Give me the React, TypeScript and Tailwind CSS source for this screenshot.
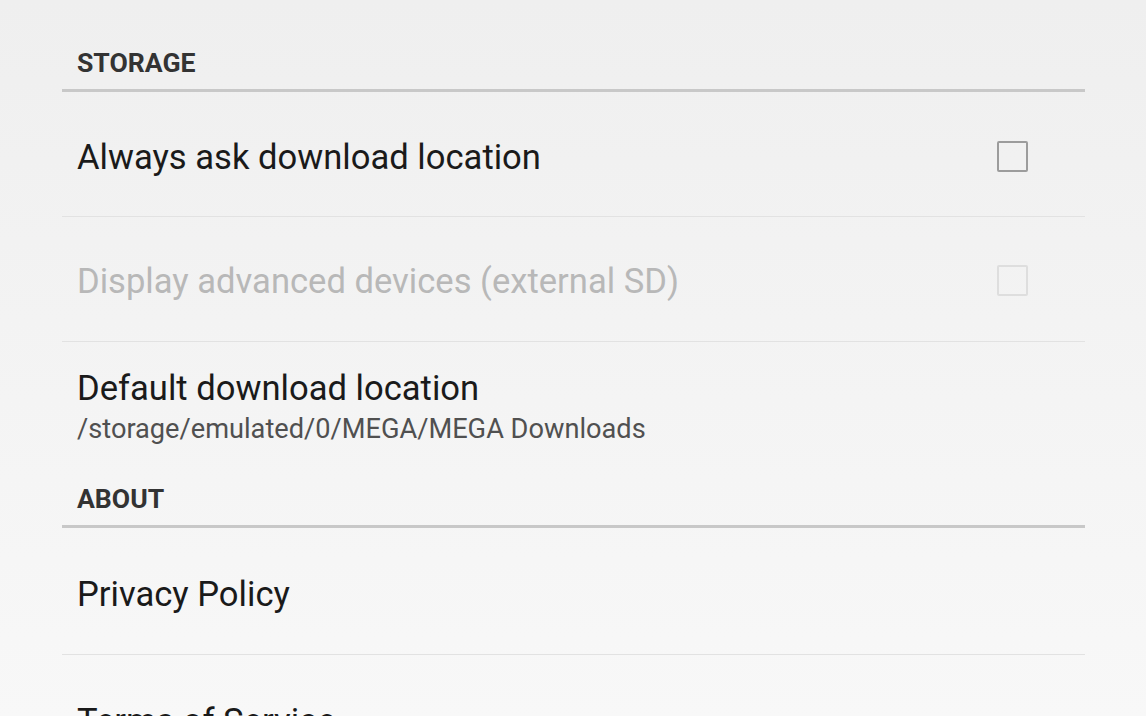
import React from "react";

function Checkbox({ disabled }: { disabled?: boolean }) {
  return (
    <div
      className={
        disabled
          ? "w-[31px] h-[31px] border-2 border-[#dedede] rounded-[2px] shrink-0"
          : "w-[31px] h-[31px] border-2 border-[#9c9c9c] rounded-[2px] shrink-0"
      }
    />
  );
}

function Header({ label }: { label: string }) {
  return (
    <div>
      <div className="pt-[48px] pb-[11px] pl-[15px] text-[26.6px] leading-[30px] font-bold text-[#333333]">
        {label}
      </div>
      <div className="h-[3px] bg-[#c8c8c8]" />
    </div>
  );
}

export default function App() {
  return (
    <div
      className="w-full h-[716px] overflow-hidden bg-linear-to-b from-[#efefef] to-[#f8f8f8]"
      style={{ fontFamily: "Roboto, 'Noto Sans', sans-serif" }}
    >
      <div className="ml-[62px] w-[1023px]">
        <Header label="STORAGE" />
        <div className="h-[124px] pt-[5px] flex items-center justify-between pl-[15px] pr-[57px]">
          <span className="text-[34.6px] leading-[40px] text-[#1a1a1a]">Always ask download location</span>
          <Checkbox />
        </div>
        <div className="h-px bg-[#e2e2e2]" />
        <div className="h-[124px] pt-[3px] flex items-center justify-between pl-[15px] pr-[57px]">
          <span className="text-[34.6px] leading-[40px] text-[#b8b8b8]">Display advanced devices (external SD)</span>
          <Checkbox disabled />
        </div>
        <div className="h-px bg-[#e2e2e2]" />
        <div className="pt-[26px] pl-[15px] flex flex-col gap-[5px]">
          <span className="text-[34.6px] leading-[40px] text-[#1a1a1a]">Default download location</span>
          <span className="text-[27.2px] leading-[32px] text-[#505050]">/storage/emulated/0/MEGA/MEGA Downloads</span>
        </div>
        <div className="-mt-[9px]">
          <Header label="ABOUT" />
        </div>
        <div className="h-[126px] pt-[5px] flex items-center pl-[15px]">
          <span className="text-[34.6px] leading-[40px] text-[#1a1a1a]">Privacy Policy</span>
        </div>
        <div className="h-px bg-[#e2e2e2]" />
        <div className="h-[126px] pt-[5px] flex items-center pl-[15px]">
          <span className="text-[34.6px] leading-[40px] text-[#1a1a1a]">Terms of Service</span>
        </div>
      </div>
    </div>
  );
}
